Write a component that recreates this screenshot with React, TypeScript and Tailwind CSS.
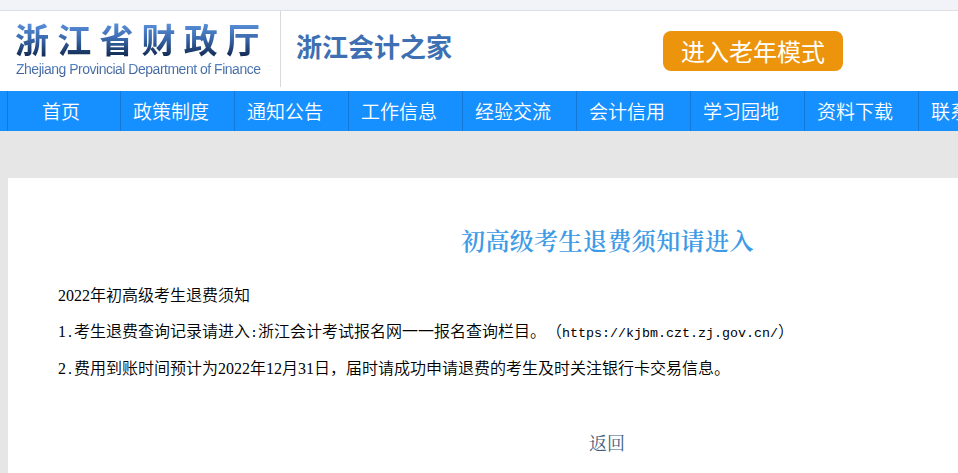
const navItems = ['政策制度', '通知公告', '工作信息', '经验交流', '会计信用', '学习园地', '资料下载', '联系我们'];

const notices = [
  '2022年初高级考生退费须知',
  '1.考生退费查询记录请进入:浙江会计考试报名网一一报名查询栏目。（https://kjbm.czt.zj.gov.cn/）',
  '2.费用到账时间预计为2022年12月31日，届时请成功申请退费的考生及时关注银行卡交易信息。',
];

export default function App() {
  return (
    <div className="h-[473px] w-full overflow-hidden bg-[#e6e6e6] font-['Noto_Sans_CJK_SC',sans-serif]">
      <div className="h-[11px] border-b border-[#dedfe4] bg-[#f2f3f8]" />
      <Header />
      <Nav />
      <Article />
    </div>
  );
}

function Header() {
  return (
    <header className="flex h-20 bg-white">
      <div className="h-[76px] w-[281px] shrink-0 border-r border-[#d9d9d9] pt-2 pl-[15px]">
        <div className="w-[260px] bg-linear-to-b from-[#5a92dc] from-10% via-[#3a68ac] via-50% to-[#10294f] to-95% bg-clip-text text-[34px] leading-[40px] font-bold tracking-[8.2px] whitespace-nowrap text-transparent">
          浙江省财政厅
        </div>
        <div className="ml-px w-[254px] bg-linear-to-b from-[#5b93e0] to-[#35507c] bg-clip-text pt-px font-['Liberation_Sans',sans-serif] text-sm leading-[19px] tracking-[-0.49px] whitespace-nowrap text-transparent">
          Zhejiang Provincial Department of Finance
        </div>
      </div>
      <h1 className="w-[382px] shrink-0 pt-4 pl-[15px] text-[26px] leading-[38px] font-bold text-[#3e6fb2]">浙江会计之家</h1>
      <button type="button" className="mt-5 h-10 w-[180px] shrink-0 rounded-lg bg-[#ec950c] text-2xl leading-10 text-white">
        进入老年模式
      </button>
    </header>
  );
}

function Nav() {
  return (
    <nav className="flex h-10 overflow-hidden bg-[#1690ff] pl-[7px] text-[19px] leading-10 font-[350] whitespace-nowrap text-white">
      <a className="w-[113px] shrink-0 border-l border-[#1279d8] pr-[6px] text-center">首页</a>
      {navItems.map(item => (
        <a key={item} className="w-[114px] shrink-0 border-l border-[#1279d8] pl-3">{item}</a>
      ))}
    </nav>
  );
}

function Article() {
  return (
    <main className="mt-[47px] ml-2 h-[295px] bg-white">
      <h2 className="pt-[45px] pl-[453px] font-['Noto_Serif_CJK_SC','Noto_Sans_CJK_SC',serif] text-2xl leading-[34px] font-semibold tracking-[0.4px] whitespace-nowrap text-[#3d9be6]">
        初高级考生退费须知请进入
      </h2>
      <div className="mt-[18.5px] pl-[50px] text-base leading-[36.5px] whitespace-nowrap text-black [text-spacing-trim:space-all]">
        {notices.map(text => <NoticeLine key={text} text={text} />)}
      </div>
      <a className="mt-[42.5px] block pl-[581px] font-['Noto_Serif_CJK_SC','Noto_Sans_CJK_SC',serif] text-lg leading-7 text-[#3f5f80]">返回</a>
    </main>
  );
}

// Digits and Latin runs are both set half as wide as a Chinese character
function NoticeLine({ text }: { text: string }) {
  return (
    <p className="h-[36.5px] font-[350]">
      {text.split(/(\d+|[!-~]+)/).map((part, index) => {
        if (index % 2 === 0) return part;
        return /^\d/.test(part) ? (
          <span key={index} className="font-['Liberation_Serif',serif]">{part}</span>
        ) : (
          <span key={index} className="font-['Liberation_Mono',monospace] text-[13.33px]">{part}</span>
        );
      })}
    </p>
  );
}
